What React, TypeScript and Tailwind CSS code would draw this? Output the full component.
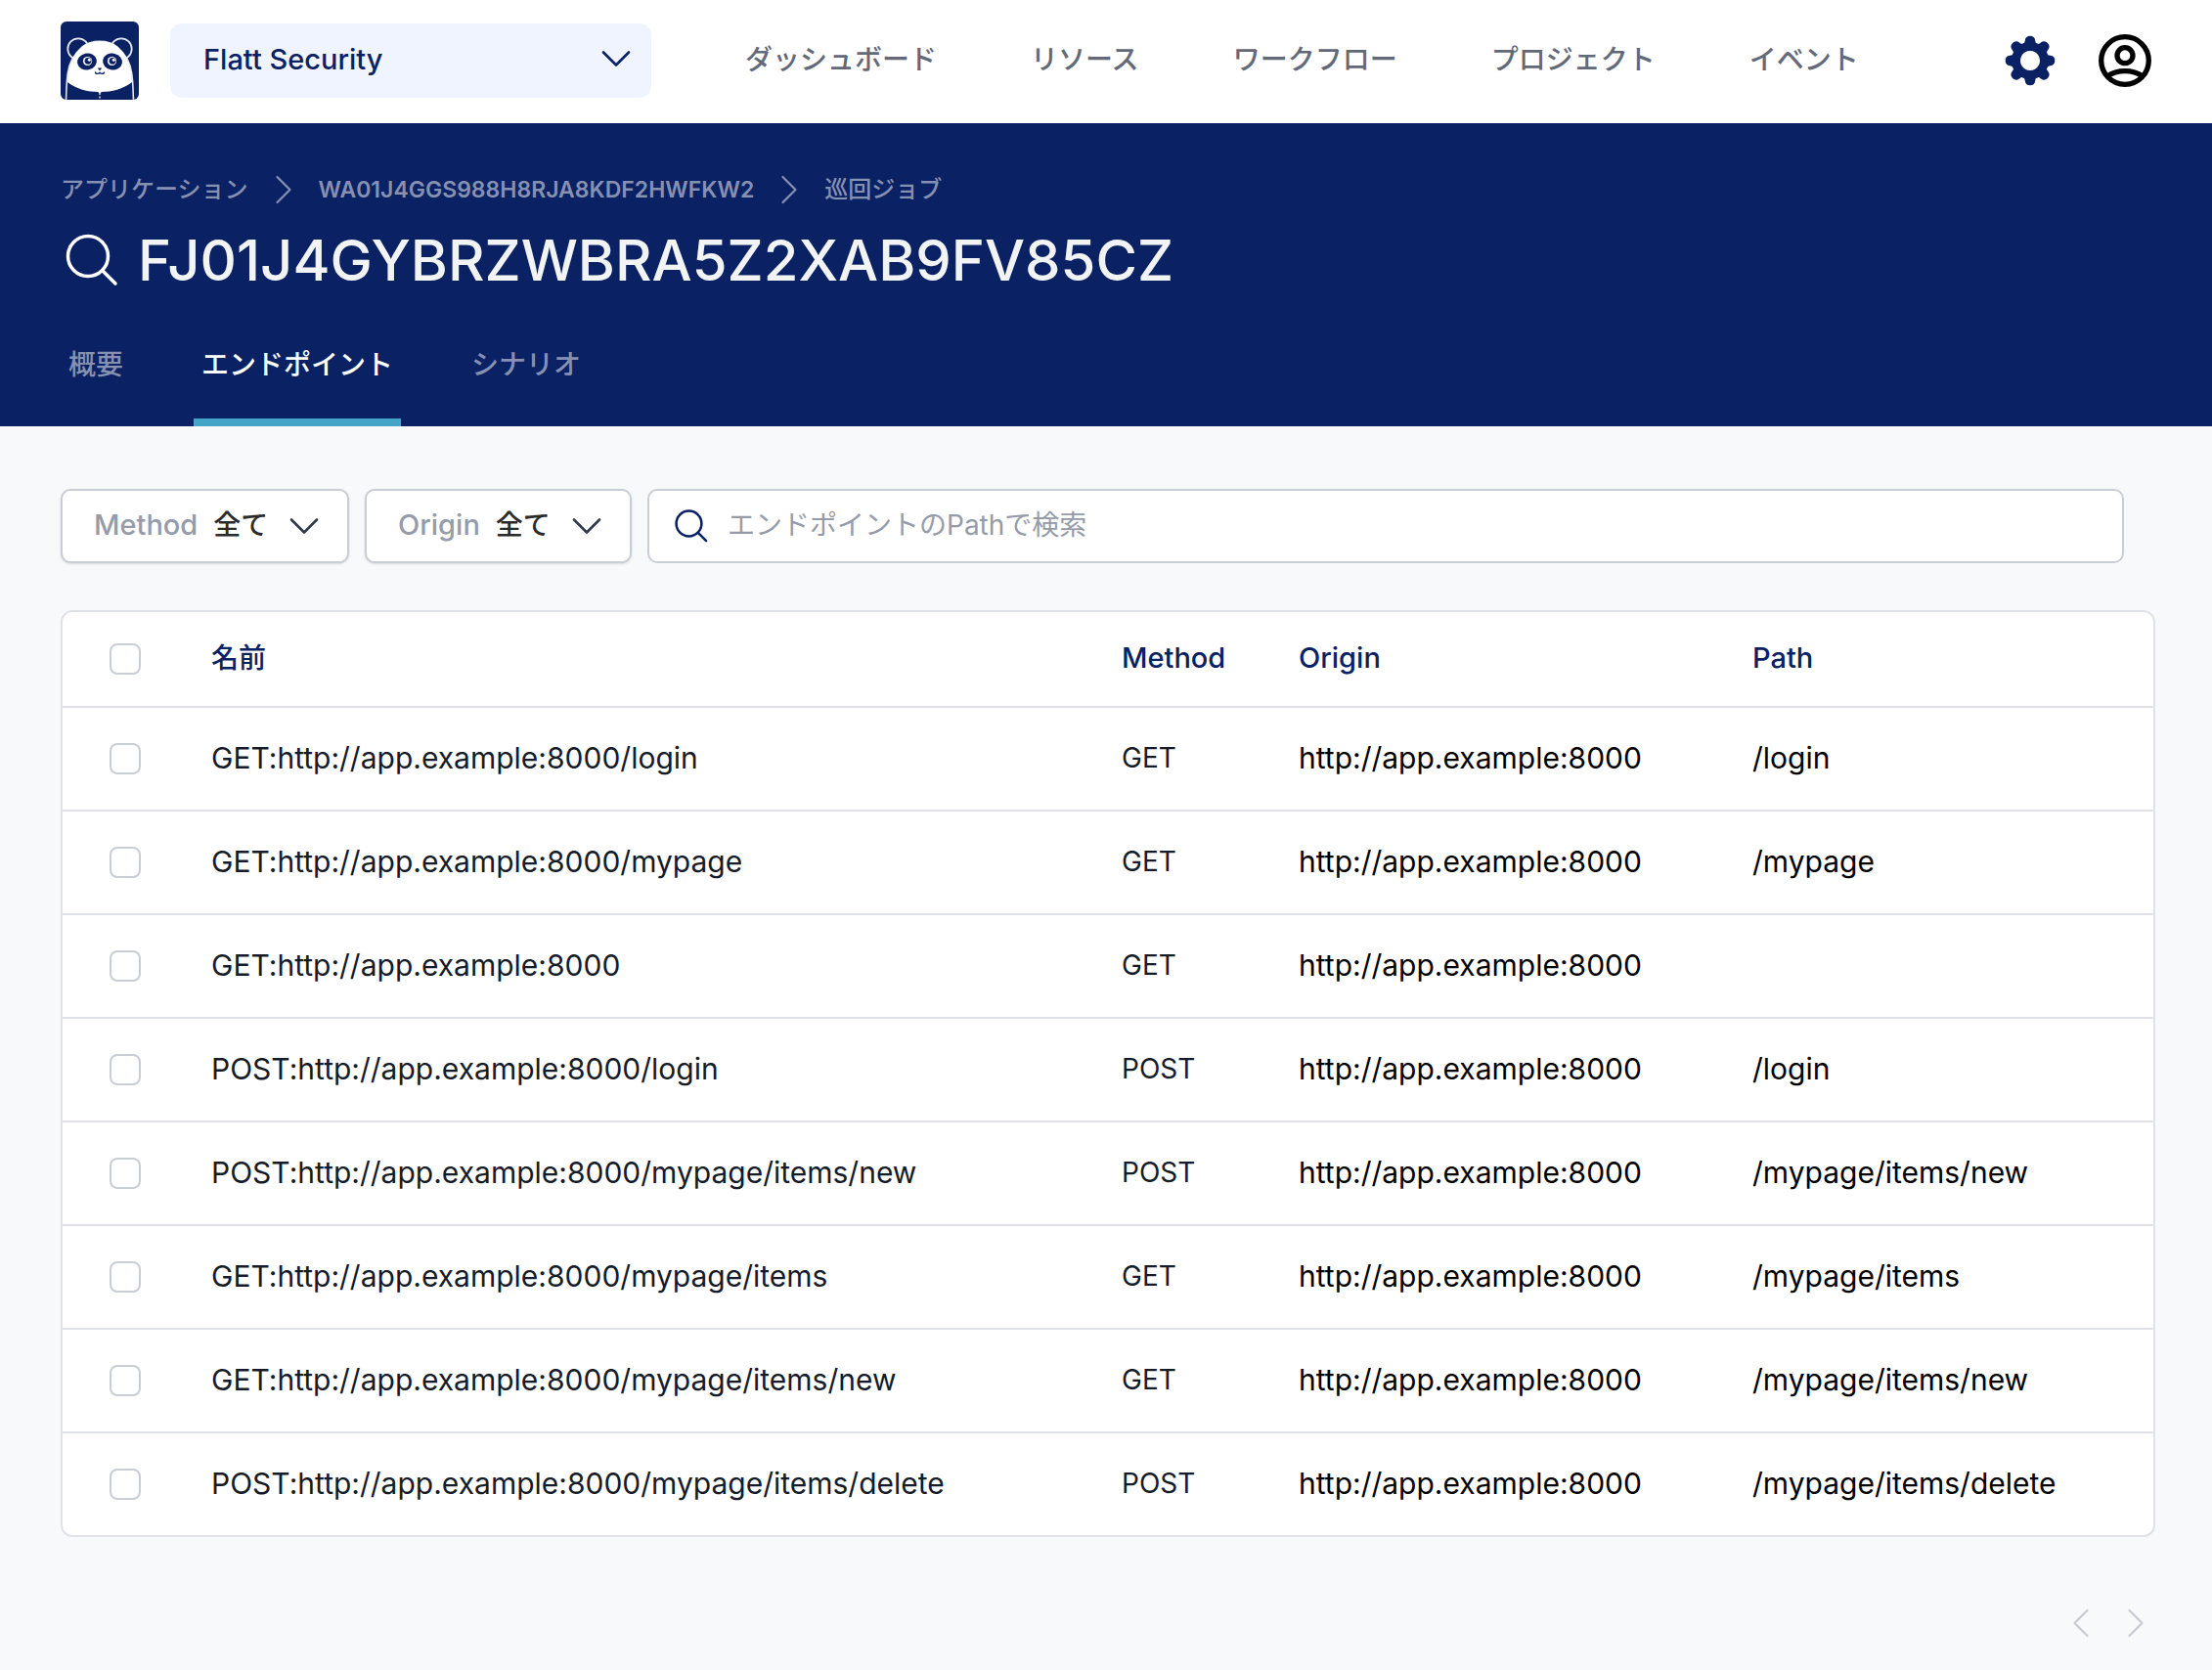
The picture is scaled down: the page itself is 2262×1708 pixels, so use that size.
import React from "react";

const navItems = ["ダッシュボード", "リソース", "ワークフロー", "プロジェクト", "イベント"];

const endpoints = [
  { method: "GET", path: "/login" },
  { method: "GET", path: "/mypage" },
  { method: "GET", path: "" },
  { method: "POST", path: "/login" },
  { method: "POST", path: "/mypage/items/new" },
  { method: "GET", path: "/mypage/items" },
  { method: "GET", path: "/mypage/items/new" },
  { method: "POST", path: "/mypage/items/delete" },
];

const origin = "http://app.example:8000";

function PandaLogo() {
  return (
    <svg viewBox="0 0 80 80" className="size-20 shrink-0 rounded-md" aria-hidden="true">
      <rect width="80" height="80" fill="#0a2164" />
      <circle cx="18" cy="28" r="10.7" fill="#0a2164" stroke="#e4e7ef" strokeWidth="1.8" />
      <circle cx="62" cy="28" r="10.7" fill="#0a2164" stroke="#e4e7ef" strokeWidth="1.8" />
      <path
        d="M5.5 81C6 68 6 60 7.5 52C9 41 14 33 22 26C27 22 33 20.3 40 20.3C47 20.3 53 22 58 26C66 33 71 41 72.5 52C74 60 74 68 74.5 81Z"
        fill="#0a2164"
        stroke="#e4e7ef"
        strokeWidth="1.6"
      />
      <path
        d="M7 62C7 48 12 34 22 26C27 22 33 20.3 40 20.3C47 20.3 53 22 58 26C68 34 73 48 73 62C64 69 52 72 42 72L40 73.5L38 72C28 72 16 69 7 62Z"
        fill="#fff"
      />
      <ellipse cx="27" cy="41" rx="10" ry="8.5" fill="#0a2164" transform="rotate(-12 27 41)" />
      <ellipse cx="53" cy="41" rx="10" ry="8.5" fill="#0a2164" transform="rotate(12 53 41)" />
      <circle cx="27.5" cy="40.5" r="4.6" fill="#fff" />
      <circle cx="52.5" cy="40.5" r="4.6" fill="#fff" />
      <circle cx="28" cy="40.3" r="3.4" fill="#0a2164" />
      <circle cx="53" cy="40.3" r="3.4" fill="#0a2164" />
      <circle cx="29.3" cy="39.3" r="1.5" fill="#fff" />
      <circle cx="54.3" cy="39.3" r="1.5" fill="#fff" />
      <path d="M37.8 47.5H42.2L40 50.5Z" fill="#0a2164" />
      <path
        d="M35.5 51.5C35.5 54 39.5 54 40 51.8C40.5 54 44.5 54 44.5 51.5"
        fill="none"
        stroke="#0a2164"
        strokeWidth="1.4"
      />
      <path d="M40 73V80" stroke="#e4e7ef" strokeWidth="1.4" strokeDasharray="2 1.5" />
    </svg>
  );
}

function GearIcon() {
  const teeth = [0, 45, 90, 135, 180, 225, 270, 315];
  return (
    <svg viewBox="0 0 52 52" className="size-[52px]" aria-hidden="true">
      <path d="M26 7A19 19 0 1 1 25.99 7ZM26 16A10 10 0 1 0 26.01 16Z" fill="#0a2164" fillRule="evenodd" />
      {teeth.map((deg) => (
        <path
          key={deg}
          d="M17.5 9.5C20.5 8.5 20.5 7 20.8 5.2A5.25 5.25 0 0 1 31.2 5.2C31.5 7 31.5 8.5 34.5 9.5L31 13H21Z"
          fill="#0a2164"
          transform={`rotate(${deg} 26 26)`}
        />
      ))}
    </svg>
  );
}

function UserIcon() {
  return (
    <svg viewBox="0 0 54 54" className="size-[54px]" fill="none" stroke="#000" strokeWidth="5.3" aria-hidden="true">
      <circle cx="27" cy="27" r="24.3" />
      <circle cx="27" cy="21.7" r="8" />
      <path d="M9 43C19 35.8 35 35.8 45 43" />
    </svg>
  );
}

function ChevronDown({ className }: { className: string }) {
  return (
    <svg
      viewBox="0 0 32 20"
      className={`h-5 w-8 pointer-events-none ${className}`}
      fill="none"
      stroke="currentColor"
      strokeWidth="2.6"
      strokeLinecap="round"
      strokeLinejoin="round"
      aria-hidden="true"
    >
      <path d="M3 3.5L16 16.5L29 3.5" />
    </svg>
  );
}

function ChevronSide({ d }: { d: string }) {
  return (
    <svg
      viewBox="0 0 20 32"
      className="h-8 w-5"
      fill="none"
      stroke="currentColor"
      strokeWidth="2.2"
      strokeLinecap="round"
      strokeLinejoin="round"
      aria-hidden="true"
    >
      <path d={d} />
    </svg>
  );
}

const right = "M3.5 3L16.5 16L3.5 29";
const left = "M16.5 3L3.5 16L16.5 29";

function SearchIcon({ className }: { className: string }) {
  return (
    <svg viewBox="0 0 54 54" className={className} fill="none" stroke="currentColor" strokeLinecap="round" aria-hidden="true">
      <circle cx="23" cy="23" r="20.5" />
      <path d="M38 38L51 51" />
    </svg>
  );
}

function Header() {
  return (
    <header className="flex h-[126px] items-center bg-white pr-[62px] pb-0.5 pl-[62px]">
      <a href="#" aria-label="ホーム">
        <PandaLogo />
      </a>
      <div className="relative ml-8 w-[492px]">
        <select
          aria-label="組織"
          className="h-[76px] w-full appearance-none rounded-xl bg-[#f0f4fe] px-[34px] pb-0.5 text-[29px] font-medium text-[#0a2164]"
        >
          <option>Flatt Security</option>
        </select>
        <ChevronDown className="absolute top-[26px] right-5 text-[#0a2164]" />
      </div>
      <nav className="ml-24 flex gap-24 pb-0.5 font-medium text-[#636979]">
        {navItems.map((item) => (
          <a key={item} href="#">
            {item}
          </a>
        ))}
      </nav>
      <div className="ml-auto flex items-center gap-11">
        <button aria-label="設定">
          <GearIcon />
        </button>
        <button aria-label="アカウント">
          <UserIcon />
        </button>
      </div>
    </header>
  );
}

function Banner() {
  return (
    <section className="bg-[#0a2164] px-[62px] pt-[50px]">
      <div className="flex h-9 items-center gap-[26px] text-2xl font-medium text-[#8690b1]">
        <a href="#">アプリケーション</a>
        <ChevronSide d={right} />
        <a href="#" className="text-[23px] font-semibold">
          WA01J4GGS988H8RJA8KDF2HWFKW2
        </a>
        <ChevronSide d={right} />
        <a href="#">巡回ジョブ</a>
      </div>
      <div className="flex h-[108px] items-center gap-5 pl-[5px]">
        <SearchIcon className="size-[54px] stroke-[3.5] text-white" />
        <h1 className="text-[58px] font-medium text-[#f1f3f5]">FJ01J4GYBRZWBRA5Z2XAB9FV85CZ</h1>
      </div>
      <div className="flex h-[116px] gap-16 font-medium text-[#8690b1]">
        <button className="border-b-8 border-transparent px-2 pb-0.5">概要</button>
        <button className="border-b-8 border-[#45a5c9] px-2 pb-0.5 text-white">エンドポイント</button>
        <button className="border-b-8 border-transparent px-2 pb-0.5">シナリオ</button>
      </div>
    </section>
  );
}

function Filter({ label, width }: { label: string; width: string }) {
  return (
    <label
      className={`relative flex h-[76px] items-center gap-4 rounded-[10px] border-2 border-[#c9cdd4] bg-white pb-0.5 pl-8 font-medium text-[#959ba9] shadow-sm ${width}`}
    >
      <span className="text-[29px]">{label}</span>
      <select className="min-w-0 flex-1 appearance-none text-[#2b2b2b]">
        <option>全て</option>
      </select>
      <ChevronDown className="absolute top-[26px] right-7 text-[#303a4b]" />
    </label>
  );
}

function Checkbox({ label }: { label: string }) {
  return (
    <input
      type="checkbox"
      aria-label={label}
      className="block size-8 appearance-none rounded-lg border-2 border-[#c9cdd4] bg-white checked:bg-[#0a2164]"
    />
  );
}

function EndpointTable() {
  return (
    <div className="mt-12 overflow-hidden rounded-xl border-2 border-[#e1e2e8] bg-white">
      <table className="w-full table-fixed text-left">
        <colgroup>
          <col className="w-[152px]" />
          <col />
          <col className="w-[181px]" />
          <col className="w-[464px]" />
          <col className="w-[410px]" />
        </colgroup>
        <thead className="text-[#0a2164]">
          <tr className="h-[97px] border-b-2 border-[#e1e2e8]">
            <th className="pl-12">
              <Checkbox label="すべて選択" />
            </th>
            <th className="pb-0.5 font-medium">名前</th>
            <th className="pb-0.5 text-[29px] font-medium">Method</th>
            <th className="pb-0.5 text-[29px] font-medium">Origin</th>
            <th className="pb-0.5 text-[29px] font-medium">Path</th>
          </tr>
        </thead>
        <tbody>
          {endpoints.map(({ method, path }) => (
            <tr key={method + path} className="h-[106px] border-b-2 border-[#e1e2e8] last:h-[105px] last:border-b-0">
              <td className="pl-12">
                <Checkbox label={`${method}:${origin}${path}`} />
              </td>
              <td className="pb-0.5 text-[30px] text-[#151b28]">{`${method}:${origin}${path}`}</td>
              <td className="pb-0.5 text-[#151b28]">{method}</td>
              <td className="pb-0.5 text-[30px] text-black">{origin}</td>
              <td className="pb-0.5 text-[30px] text-black">{path}</td>
            </tr>
          ))}
        </tbody>
      </table>
    </div>
  );
}

function App() {
  return (
    <div className="min-h-screen bg-[#f8f9fb] font-['Inter','Noto_Sans_CJK_JP',sans-serif] text-[28px] leading-10">
      <Header />
      <Banner />
      <main className="pt-16 pr-[58px] pb-8 pl-[62px]">
        <div className="mr-8 flex gap-4">
          <Filter label="Method" width="w-[295px]" />
          <Filter label="Origin" width="w-[273px]" />
          <div className="flex h-[76px] flex-1 items-center gap-5 rounded-[10px] border-2 border-[#c9cdd4] bg-white px-[26px]">
            <SearchIcon className="size-[34px] stroke-[4] text-[#0a2164]" />
            <input
              type="search"
              aria-label="エンドポイントのPathで検索"
              placeholder="エンドポイントのPathで検索"
              className="flex-1 pb-0.5 outline-none placeholder:text-[#959ba9]"
            />
          </div>
        </div>
        <EndpointTable />
        <div className="mt-[72px] flex justify-end gap-9 pr-2.5 text-[#c9cad3]">
          <button aria-label="前のページ">
            <ChevronSide d={left} />
          </button>
          <button aria-label="次のページ">
            <ChevronSide d={right} />
          </button>
        </div>
      </main>
    </div>
  );
}

export default App;
